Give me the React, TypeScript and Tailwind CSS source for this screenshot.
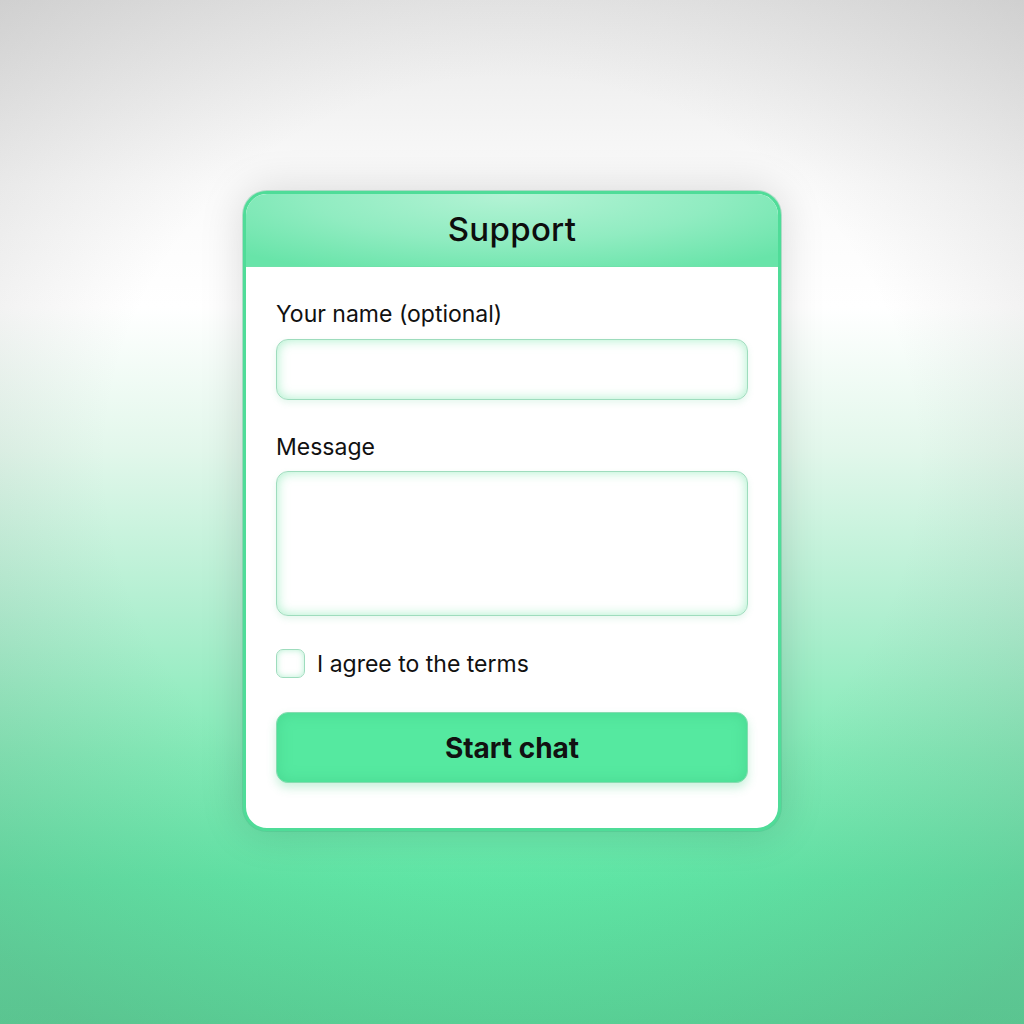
import React, { useState } from 'react';

export default function App() {
  const [name, setName] = useState('');
  const [message, setMessage] = useState('');
  const [agreed, setAgreed] = useState(false);

  return (
    <div
      className="relative w-full h-[1024px] overflow-hidden flex justify-center bg-[linear-gradient(180deg,#e8e8e8_0%,#fafafa_18%,#ffffff_30%,#e2f7eb_44%,#b0efd0_60%,#84ebb8_73%,#5ee8a6_86%,#55dd9a_100%)]"
      style={{ fontFamily: 'Inter, "Noto Sans", sans-serif' }}
    >
      {/* vignette */}
      <div className="absolute inset-0 pointer-events-none bg-[radial-gradient(ellipse_72%_68%_at_50%_45%,rgba(255,255,255,0)_55%,rgba(110,110,110,0.22)_100%)]" />

      <div className="relative mt-[191px] w-[538px] h-[640px] rounded-[24px] border-[3px] border-[#4fdc98] bg-white overflow-hidden shadow-[0_0_44px_rgba(0,0,0,0.15),0_0_0_1px_rgba(70,200,140,0.35)] flex flex-col">
        {/* header */}
        <div className="h-[73px] shrink-0 flex items-center justify-center border-b border-[#6fe2aa] bg-[radial-gradient(ellipse_70%_120%_at_50%_0%,#b4f3d5_0%,#90ecc1_55%,#68e4a9_100%)]">
          <h1 className="text-[33px] font-medium text-[#0d0d0d] tracking-[0.3px]">Support</h1>
        </div>

        {/* body */}
        <div className="flex flex-col px-[30px] pt-[33px]">
          <label className="text-[23px] text-[#111] leading-[28px]">Your name (optional)</label>
          <input
            value={name}
            onChange={(e) => setName(e.target.value)}
            className="mt-[11px] h-[61px] w-full rounded-[12px] border-[1.5px] border-[#9edcbd] bg-white outline-none px-4 shadow-[inset_0_0_12px_rgba(110,228,165,0.6),0_3px_6px_rgba(90,200,140,0.15)]"
          />

          <label className="mt-[33px] text-[23px] text-[#111] leading-[28px]">Message</label>
          <textarea
            value={message}
            onChange={(e) => setMessage(e.target.value)}
            className="mt-[10px] h-[145px] w-full resize-none rounded-[12px] border-[1.5px] border-[#9edcbd] bg-white outline-none p-4 shadow-[inset_0_0_12px_rgba(110,228,165,0.6),0_3px_6px_rgba(90,200,140,0.15)]"
          />

          <label className="mt-[33px] flex items-center gap-[12px] cursor-pointer">
            <span
              onClick={() => setAgreed(!agreed)}
              className={`w-[29px] h-[29px] rounded-[7px] border-[1.5px] border-[#9edcbd] shadow-[inset_0_0_6px_rgba(110,228,165,0.5)] ${
                agreed ? 'bg-[#55e9a0]' : 'bg-white'
              }`}
            />
            <span className="text-[23px] text-[#111] leading-[28px]">I agree to the terms</span>
          </label>

          <button className="mt-[34px] h-[71px] w-full rounded-[12px] border-[1.5px] border-[#86dcb0] bg-[#55e9a0] text-[28px] font-bold text-[#111] shadow-[inset_0_0_14px_rgba(60,200,130,0.5),0_5px_10px_rgba(80,210,140,0.3)]">
            Start chat
          </button>
        </div>
      </div>
    </div>
  );
}
